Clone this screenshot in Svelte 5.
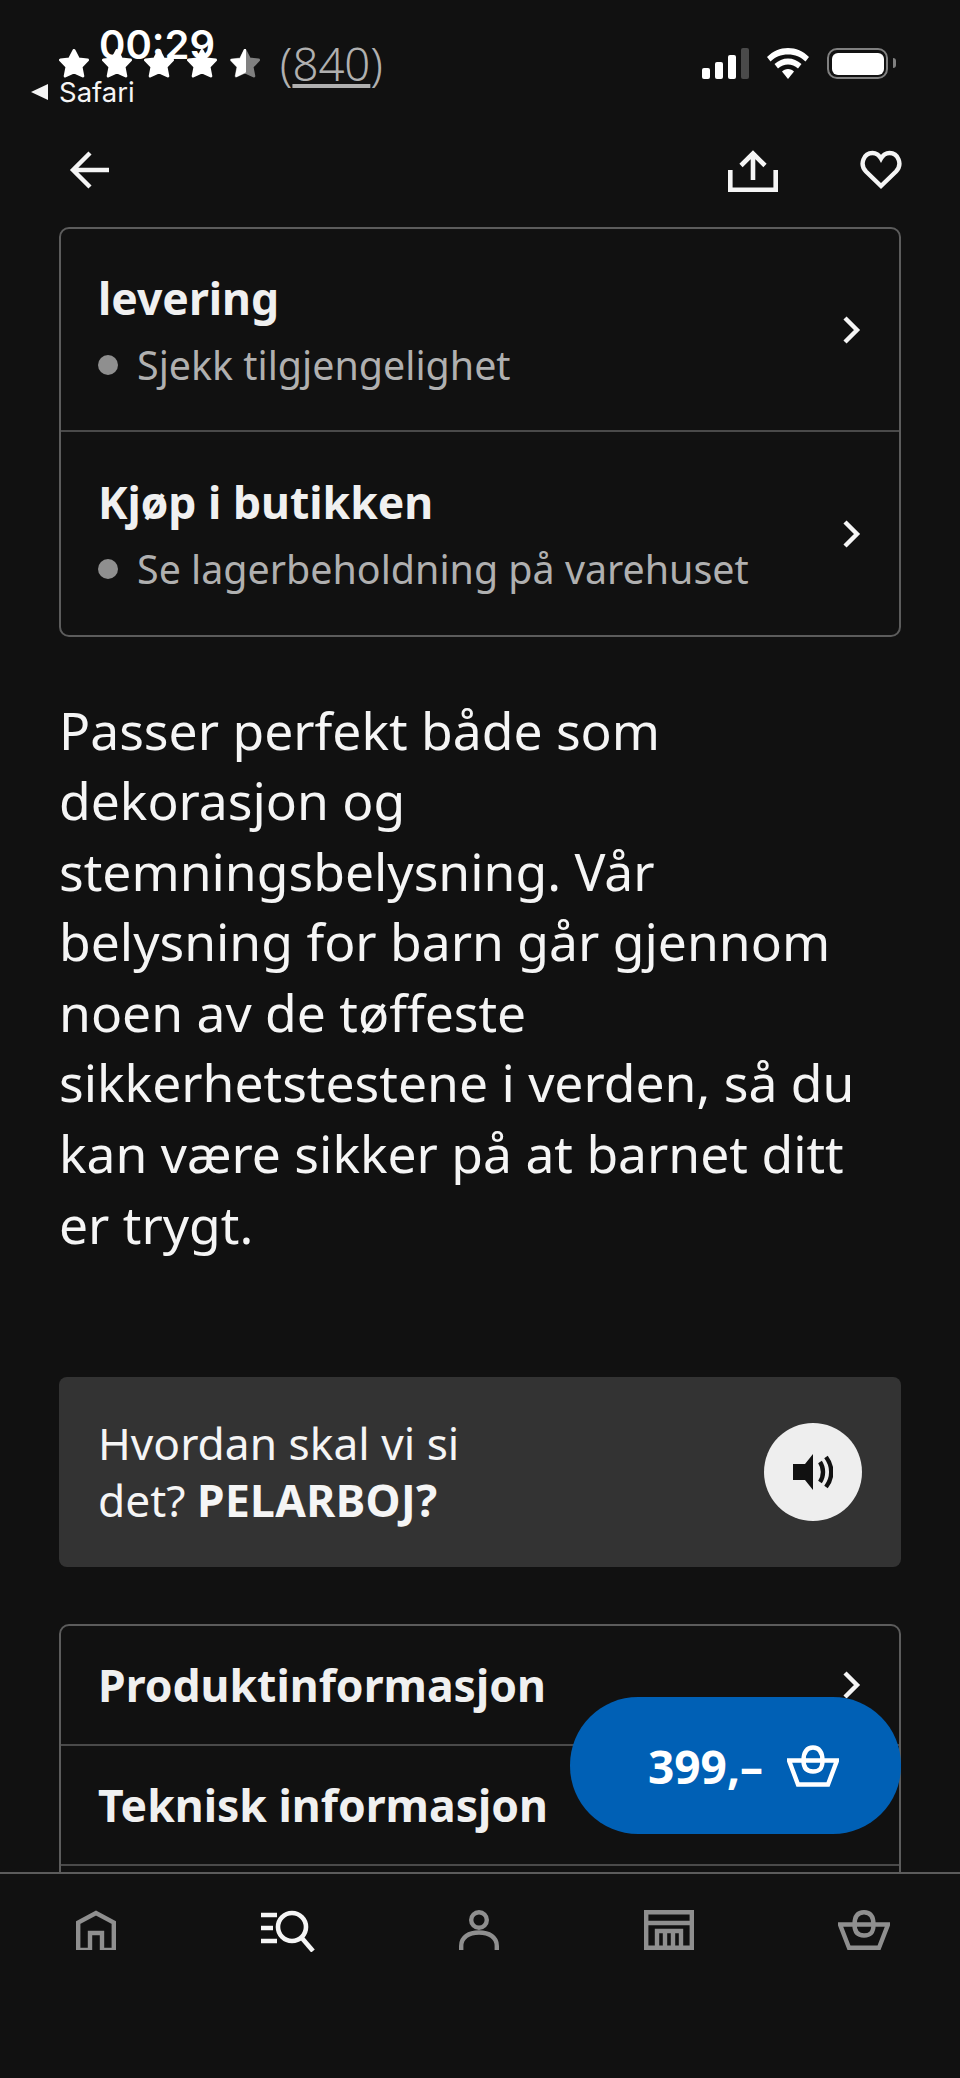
<script>
  const stars = [0, 1, 2, 3];
  const starPath = 'M15 1.500L19.400 9.900 28.500 11 22 17.800 23.800 27 15 22.800 6.200 27 8 17.800 1.500 11 10.600 9.900z';

  const deliveryRows = [
    { title: 'levering', note: 'Sjekk tilgjengelighet' },
    { title: 'Kjøp i butikken', note: 'Se lagerbeholdning på varehuset' }
  ];
  const infoRows = ['Produktinformasjon', 'Teknisk informasjon'];
</script>

<div class="phone">
  <main class="scroll">
    <div class="rating">
      <div class="stars">
        {#each stars as s (s)}
          <svg width="30" height="29" viewBox="0 0 30 29"><path d={starPath} fill="#fff" stroke="#fff" stroke-width="3" stroke-linejoin="round" /></svg>
        {/each}
        <svg width="30" height="29" viewBox="0 0 30 29">
          <path d={starPath} fill="#808080" stroke="#808080" stroke-width="3" stroke-linejoin="round" />
          <path d="M15 0.500L10.600 9.900 1.500 11 8 17.800 6.200 27 15 22.800z" fill="#fff" stroke="#fff" stroke-width="2" stroke-linejoin="round" />
        </svg>
      </div>
      <span class="count">(<u>840</u>)</span>
    </div>

    <nav class="topbar">
      <svg class="back" width="40" height="40" viewBox="0 0 40 40" fill="none" stroke="#f5f5f5" stroke-width="4.400">
        <path d="M21 3L4 20l17 17M4 20h36" />
      </svg>
      <div class="top-actions">
        <svg width="50" height="42" viewBox="0 0 50 42" fill="none" stroke="#f5f5f5" stroke-width="4.600">
          <path d="M2.300 20v19.700h45.400V20M25 30V3M13 15.500L25 3.500l12 12" />
        </svg>
        <svg width="42" height="40" viewBox="0 0 42 40" fill="none" stroke="#f5f5f5" stroke-width="4.400">
          <path d="M21 36L6 21.500C-1 14 4 3 12.500 3c4 0 6.500 2 8.500 5.500C23 5 25.500 3 29.500 3 38 3 43 14 36 21.500z" />
        </svg>
      </div>
    </nav>

    <section class="card">
      {#each deliveryRows as row}
        <div class="row tall">
          <div class="row-text">
            <h3>{row.title}</h3>
            <p class="note"><i class="dot"></i>{row.note}</p>
          </div>
          <svg class="chev" width="20" height="30" viewBox="0 0 20 30" fill="none" stroke="#f5f5f5" stroke-width="4.400">
            <path d="M3 3l12 12L3 27" />
          </svg>
        </div>
      {/each}
    </section>

    <p class="lead">
      Passer perfekt både som dekorasjon og stemningsbelysning. Vår belysning for barn går gjennom noen av de tøffeste sikkerhetstestene i verden, så du kan være sikker på at barnet ditt er trygt.
    </p>

    <section class="say">
      <p>Hvordan skal vi si<br />det? <b>PELARBOJ?</b></p>
      <button class="speaker" aria-label="Spill av">
        <svg width="40" height="36" viewBox="0 0 40 36">
          <path d="M0 10h12L20 0v36L12 26H0z" fill="#111" />
          <path d="M27 8c4 6 4 14 0 20M33 3c7 9 7 21 0 30" fill="none" stroke="#111" stroke-width="4.400" />
        </svg>
      </button>
    </section>

    <section class="card info">
      {#each infoRows as row}
        <div class="row">
          <h3>{row}</h3>
          <svg class="chev" width="20" height="30" viewBox="0 0 20 30" fill="none" stroke="#f5f5f5" stroke-width="4.400">
            <path d="M3 3l12 12L3 27" />
          </svg>
        </div>
      {/each}
    </section>
  </main>

  <div class="statusbar">
    <div class="clock">
      <span class="time">00:29</span>
      <span class="safari"><i class="tri"></i>Safari</span>
    </div>
    <div class="sys">
      <div class="bars"><i></i><i></i><i></i><i></i></div>
      <svg width="42" height="31" viewBox="0 0 42 31" fill="#fff">
        <path d="M21 0c8 0 15 3 21 9l-3.500 4.500C34 9 28 6.500 21 6.500S8 9 3.500 13.500L0 9C6 3 13 0 21 0z" />
        <path d="M21 10.500c5 0 9.500 2 13.500 5.500L31 20.500c-3-2.500-6.500-4-10-4s-7 1.500-10 4L7.500 16c4-3.500 8.500-5.500 13.500-5.500z" />
        <path d="M21 21c2.500 0 4.500 1 6 2.500L21 31l-6-7.500c1.500-1.500 3.500-2.500 6-2.500z" />
      </svg>
      <div class="battery"><i></i></div>
    </div>
  </div>

  <button class="buy">
    <span>399,–</span>
    <svg width="52" height="42" viewBox="0 0 52 42" fill="none" stroke="#fff" stroke-width="4.400">
      <path d="M2 15.500h48L41 39.500H11zM16.500 15.500C16.500 7 20 2.500 26 2.500s9.500 4.500 9.500 13-3.500 11-9.500 11-9.500-3-9.500-11z" />
    </svg>
  </button>

  <footer class="tabs">
    <svg width="40" height="40" viewBox="0 0 40 40" fill="none" stroke="#8f8f8f" stroke-width="4.400">
      <path d="M2.200 40V12.500L20 3l17.800 9.500V40H26V23H14v17z" />
    </svg>
    <svg width="54" height="42" viewBox="0 0 54 42" fill="none" stroke="#f5f5f5" stroke-width="4.600">
      <path d="M0 5h16M0 18h12M0 31h16" />
      <circle cx="31" cy="17" r="14" />
      <path d="M40 27l12 14" />
    </svg>
    <svg width="40" height="40" viewBox="0 0 40 40" fill="none" stroke="#8f8f8f" stroke-width="4.400">
      <circle cx="20" cy="10" r="7.800" />
      <path d="M2.200 40v-4C2.200 27 10 22.500 20 22.500S37.800 27 37.800 36v4" />
    </svg>
    <svg width="50" height="40" viewBox="0 0 50 40" fill="none" stroke="#8f8f8f" stroke-width="4.400">
      <path d="M2.200 2.200h45.600v35.600H2.200zM2.200 13h45.600M13 38V21h24v17M21 21v17M29 21v17" />
    </svg>
    <svg width="52" height="40" viewBox="0 0 52 40" fill="none" stroke="#8f8f8f" stroke-width="4.400">
      <path d="M2 14.500h48L41 37.800H11zM16.500 14.500C16.500 6 20 2.200 26 2.200s9.500 3.800 9.500 12.300-3.500 11-9.500 11-9.500-3-9.500-11z" />
    </svg>
  </footer>
</div>

<style>
  :global(body) {
    margin: 0;
    background: #111;
  }

  .phone {
    position: relative;
    width: 960px;
    height: 2078px;
    display: flex;
    flex-direction: column;
    overflow: hidden;
    background: #111;
    color: #f5f5f5;
    font-family: "Noto Sans", sans-serif;
  }

  .scroll {
    height: 1872px;
    flex: none;
    overflow: hidden;
    padding: 48px 59px 0;
    box-sizing: border-box;
  }

  .rating {
    display: flex;
    align-items: center;
    height: 30px;
    gap: 20px;
  }

  .stars {
    display: flex;
    gap: 12.700px;
  }

  .count {
    font-size: 45.500px;
    line-height: 30px;
    color: #b0b0b0;
    font-weight: 300;
  }

  .topbar {
    display: flex;
    justify-content: space-between;
    align-items: flex-start;
    margin-top: 72px;
    height: 77px;
    padding-left: 10px;
  }

  .top-actions {
    display: flex;
    gap: 82px;
    margin-right: -1px;
  }

  .card {
    border: 2.500px solid #5c5c5c;
    border-radius: 10px;
  }

  .row {
    display: flex;
    justify-content: space-between;
    align-items: center;
    height: 120px;
    padding: 0 37px;
    box-sizing: border-box;
    border-bottom: 2px solid #4a4a4a;
  }

  .row.tall {
    height: 203px;
  }

  .tall:last-child {
    border-bottom: 0;
  }

  .row-text {
    margin-bottom: 2px;
  }

  h3 {
    margin: 0;
    font-size: 44.500px;
    line-height: 60px;
    font-weight: 700;
    color: #f0f0f0;
  }

  .note {
    display: flex;
    align-items: center;
    margin: 12px 0 0;
    font-size: 39.400px;
    line-height: 50px;
    color: #b0b0b0;
  }

  .dot {
    width: 20px;
    height: 20px;
    border-radius: 50%;
    background: #8f8f8f;
    margin-right: 19px;
  }

  .lead {
    margin: 57.500px 0 0;
    font-size: 51.600px;
    line-height: 70.600px;
    color: #f5f5f5;
  }

  .say {
    display: flex;
    justify-content: space-between;
    align-items: center;
    height: 190px;
    margin-top: 118px;
    padding: 0 39px;
    box-sizing: border-box;
    background: #333;
    border-radius: 8px;
  }

  .say p {
    margin: 0;
    font-size: 44.300px;
    line-height: 57px;
  }

  .say b {
    letter-spacing: 0.4px;
  }

  .speaker {
    width: 98px;
    height: 98px;
    border: 0;
    border-radius: 50%;
    background: #eee;
    padding: 0;
    display: flex;
    align-items: center;
    justify-content: center;
  }

  .info {
    margin-top: 56.500px;
    padding-bottom: 60px;
  }

  .buy {
    position: absolute;
    left: 570px;
    top: 1697px;
    width: 331px;
    height: 137px;
    border: 0;
    border-radius: 68px;
    background: #0060b5;
    color: #fff;
    font-family: inherit;
    font-size: 46px;
    font-weight: 700;
    display: flex;
    align-items: center;
    justify-content: center;
    gap: 24px;
    padding: 0 0 0 16px;
  }

  .tabs {
    flex: 1;
    border-top: 2px solid #5c5c5c;
    display: flex;
    justify-content: space-between;
    align-items: flex-start;
    padding: 36px 70px 0 76px;
    background: #111;
  }

  .statusbar {
    position: absolute;
    left: 0;
    top: 0;
    width: 100%;
    height: 110px;
  }

  .clock {
    position: absolute;
    left: 31px;
    top: 21px;
  }

  .time {
    display: block;
    margin-left: 68px;
    font-family: Inter, sans-serif;
    font-size: 40px;
    line-height: 48px;
    font-weight: 600;
    color: #fff;
  }

  .safari {
    display: flex;
    align-items: center;
    margin-top: 7px;
    font-family: Inter, sans-serif;
    font-size: 27.500px;
    line-height: 32px;
    color: #f5f5f5;
  }

  .tri {
    width: 0;
    height: 0;
    border-style: solid;
    border-width: 8.500px 17px 8.500px 0;
    border-color: transparent #f5f5f5 transparent transparent;
    margin-right: 11px;
  }

  .sys {
    position: absolute;
    left: 702px;
    top: 48px;
    display: flex;
    align-items: flex-start;
    gap: 18px;
  }

  .bars {
    display: flex;
    align-items: flex-end;
    gap: 5px;
    height: 31px;
  }

  .bars i {
    width: 8px;
    border-radius: 2px;
    background: #fff;
  }

  .bars i:nth-child(1) { height: 11px; }
  .bars i:nth-child(2) { height: 17px; }
  .bars i:nth-child(3) { height: 24px; }
  .bars i:nth-child(4) { height: 31px; background: #4a4a4a; }

  .battery {
    position: relative;
    width: 61px;
    height: 31px;
    box-sizing: border-box;
    border: 2.500px solid #808080;
    border-radius: 10px;
    padding: 2.500px;
  }

  .battery i {
    display: block;
    height: 100%;
    background: #fff;
    border-radius: 6px;
  }

  .battery::after {
    content: '';
    position: absolute;
    right: -10px;
    top: 8px;
    width: 3px;
    height: 10px;
    border-radius: 0 4px 4px 0;
    background: #808080;
  }
</style>
